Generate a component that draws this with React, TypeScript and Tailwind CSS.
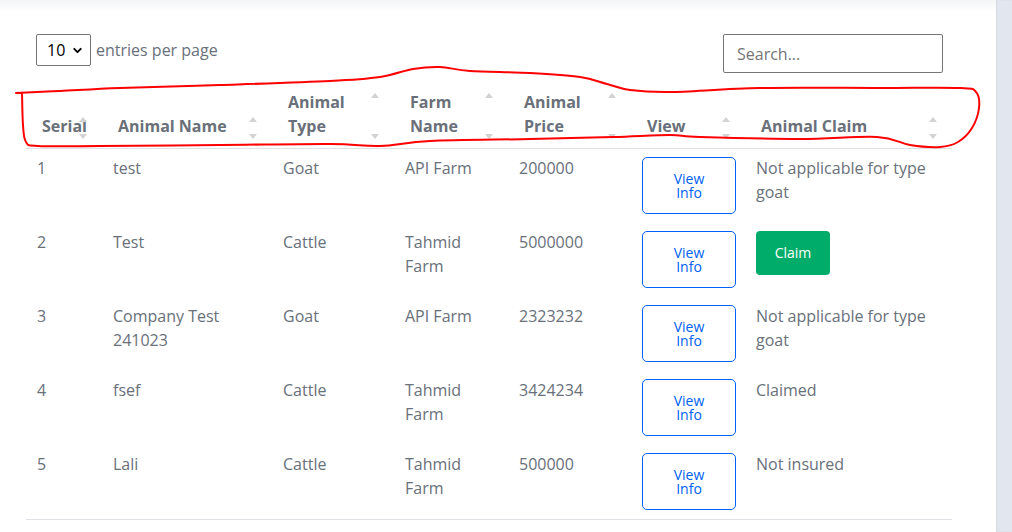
import { ChevronDown } from 'lucide-react'

type Row = {
  serial: string
  name: string[]
  type: string
  farm: string[]
  price: string
  claim: 'claim' | string[]
}

const ROWS: Row[] = [
  { serial: '1', name: ['test'], type: 'Goat', farm: ['API Farm'], price: '200000', claim: ['Not applicable for type', 'goat'] },
  { serial: '2', name: ['Test'], type: 'Cattle', farm: ['Tahmid', 'Farm'], price: '5000000', claim: 'claim' },
  { serial: '3', name: ['Company Test', '241023'], type: 'Goat', farm: ['API Farm'], price: '2323232', claim: ['Not applicable for type', 'goat'] },
  { serial: '4', name: ['fsef'], type: 'Cattle', farm: ['Tahmid', 'Farm'], price: '3424234', claim: ['Claimed'] },
  { serial: '5', name: ['Lali'], type: 'Cattle', farm: ['Tahmid', 'Farm'], price: '500000', claim: ['Not insured'] },
]

const HEADERS: string[][] = [
  ['Serial'],
  ['Animal Name'],
  ['Animal', 'Type'],
  ['Farm', 'Name'],
  ['Animal', 'Price'],
  ['View'],
  ['Animal Claim'],
]

const COL_WIDTHS = [76, 170, 122, 114, 123, 114, 207]

// red hand-drawn marker around the header row
const SCRIBBLE: [number, number][] = [
  [16, 93], [60, 91], [120, 88], [220, 85], [330, 81], [380, 77], [413, 69], [440, 67],
  [470, 71], [530, 73], [580, 77], [607, 84], [630, 90], [670, 92], [760, 88], [880, 88],
  [960, 88], [976, 92], [979, 108], [972, 128], [958, 142], [940, 147], [910, 145],
  [877, 137], [800, 139], [700, 137], [670, 135], [613, 137], [530, 139], [430, 141],
  [380, 146], [330, 144], [220, 145], [100, 146], [38, 146], [26, 142], [23, 125], [22, 93],
]

const smoothPath = (pts: [number, number][]) => {
  let d = `M ${pts[0][0]} ${pts[0][1]}`
  for (let i = 0; i < pts.length - 1; i++) {
    const p0 = pts[i - 1] || pts[i]
    const p1 = pts[i]
    const p2 = pts[i + 1]
    const p3 = pts[i + 2] || p2
    const c1x = p1[0] + (p2[0] - p0[0]) / 6
    const c1y = p1[1] + (p2[1] - p0[1]) / 6
    const c2x = p2[0] - (p3[0] - p1[0]) / 6
    const c2y = p2[1] - (p3[1] - p1[1]) / 6
    d += ` C ${c1x} ${c1y}, ${c2x} ${c2y}, ${p2[0]} ${p2[1]}`
  }
  return d
}

const SortArrows = () => (
  <>
    <span className="absolute right-[15px] top-[3px] w-0 h-0 border-x-[4px] border-x-transparent border-b-[5px] border-b-[#d3d3d3]" />
    <span className="absolute right-[15px] bottom-[-1px] w-0 h-0 border-x-[4px] border-x-transparent border-t-[5px] border-t-[#d3d3d3]" />
  </>
)

const App = () => {
  return (
    <div className="relative flex w-[1012px] h-[532px] overflow-hidden bg-white font-['Open_Sans',sans-serif] text-[16px] leading-[24px] text-[#69707a]">
      <div className="w-[996px] h-full bg-white">
        <div className="h-3 bg-gradient-to-b from-[#f4f5f7] to-white" />

        {/* Controls */}
        <div className="flex items-start justify-between ml-[36px] mr-[53px] mt-[22px]">
          <div className="flex items-center gap-[5px]">
            <div className="relative w-[55px] h-[32px] border border-[#767676] rounded-[2px] bg-white">
              <select className="appearance-none w-full h-full bg-transparent pl-[10px] text-[16px] text-black outline-none">
                <option>10</option>
                <option>25</option>
                <option>50</option>
              </select>
              <ChevronDown size={13} strokeWidth={3.5} className="absolute right-[6px] top-[9px] text-black pointer-events-none" />
            </div>
            <span>entries per page</span>
          </div>
          <input
            placeholder="Search..."
            className="w-[220px] h-[39px] border border-[#767676] rounded-[2px] pl-[13px] text-[16px] outline-none placeholder:text-[#757575]"
          />
        </div>

        {/* Table */}
        <table className="table-fixed border-collapse ml-[26px] mt-[9px] w-[926px]">
          <colgroup>
            {COL_WIDTHS.map((w, i) => (
              <col key={i} style={{ width: w }} />
            ))}
          </colgroup>
          <thead>
            <tr className="border-b border-[#dee2e6]">
              {HEADERS.map((h, i) => (
                <th key={i} className="align-bottom text-left font-bold pt-2 pb-[10px] pl-4 pr-0">
                  <div className="relative">
                    {h.map((l) => (
                      <div key={l} className="whitespace-nowrap">{l}</div>
                    ))}
                    <SortArrows />
                  </div>
                </th>
              ))}
            </tr>
          </thead>
          <tbody>
            {ROWS.map((r) => (
              <tr key={r.serial} className="align-top">
                <td className="pl-[11px] pt-[7px] pb-[9px]">{r.serial}</td>
                <td className="pl-[11px] pt-[7px] pb-[9px]">
                  {r.name.map((l) => <div key={l}>{l}</div>)}
                </td>
                <td className="pl-[11px] pt-[7px] pb-[9px]">{r.type}</td>
                <td className="pl-[11px] pt-[7px] pb-[9px]">
                  {r.farm.map((l) => <div key={l}>{l}</div>)}
                </td>
                <td className="pl-[11px] pt-[7px] pb-[9px]">{r.price}</td>
                <td className="pl-[11px] pt-2 pb-[9px]">
                  <button className="flex flex-col items-center justify-center w-[94px] h-[57px] border border-[#0061f2] rounded-[5px] bg-white text-[#0061f2] text-[14px] leading-[14px]">
                    <span>View</span>
                    <span>Info</span>
                  </button>
                </td>
                <td className="pl-[11px] pt-[7px] pb-[9px]">
                  {r.claim === 'claim' ? (
                    <button className="mt-px w-[74px] h-[44px] rounded-[4px] bg-[#00ac69] text-white text-[14px]">
                      Claim
                    </button>
                  ) : (
                    r.claim.map((l) => <div key={l} className="whitespace-nowrap">{l}</div>)
                  )}
                </td>
              </tr>
            ))}
          </tbody>
          <tfoot>
            <tr className="border-t border-[#dee2e6]">
              <td colSpan={7} className="h-px p-0" />
            </tr>
          </tfoot>
        </table>
      </div>
      <div className="flex-1 h-full bg-[#e2e6ef] shadow-[inset_1px_0_2px_rgba(0,0,0,0.06)]" />

      <svg className="absolute inset-0 pointer-events-none" width={1012} height={532}>
        <path d={smoothPath(SCRIBBLE)} fill="none" stroke="#ff0000" strokeWidth={2} strokeLinecap="round" strokeLinejoin="round" />
      </svg>
    </div>
  )
}

export default App
